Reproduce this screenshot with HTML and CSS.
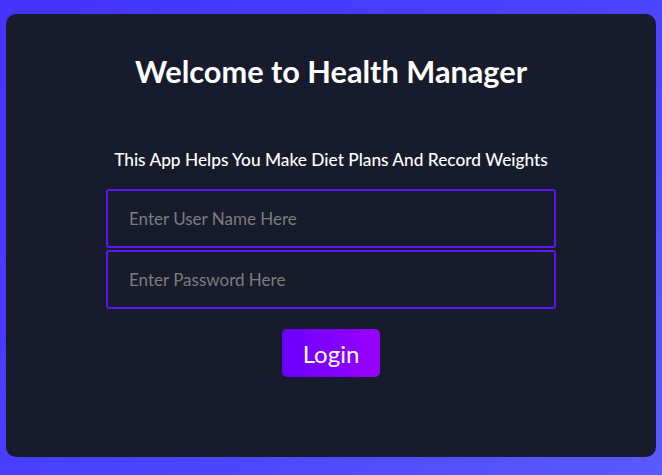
FILE: index.html
```html
<!DOCTYPE html>
<html lang="en">
<head>
<meta charset="utf-8">
<title>Health Manager</title>
<link rel="stylesheet" href="styles.css">
</head>
<body>
<main class="card">
  <h1 class="title">Welcome to Health Manager</h1>
  <p class="subtitle">This App Helps You Make Diet Plans And Record Weights</p>
  <form class="form">
    <input class="field" type="text" placeholder="Enter User Name Here">
    <input class="field" type="password" placeholder="Enter Password Here">
    <button class="login" type="button">Login</button>
  </form>
</main>
</body>
</html>
```
FILE: styles.css
```css
html, body {
  margin: 0;
  height: 100%;
}
body {
  background: linear-gradient(135deg, #4433fb 0%, #4a40ff 50%, #5a5aff 100%);
  padding: 14px 6px 18px;
  box-sizing: border-box;
  font-family: Lato, "Open Sans", sans-serif;
}
.card {
  background: #171b2b;
  border-radius: 10px;
  height: 443px;
  box-sizing: border-box;
  padding-top: 38px;
  display: flex;
  flex-direction: column;
  align-items: center;
}
.title {
  margin: 0;
  color: #ffffff;
  font-size: 30.7px;
  line-height: 40px;
  font-weight: 700;
}
.subtitle {
  margin: 57px 0 0;
  color: #ffffff;
  font-size: 17.3px;
  line-height: 22px;
  font-weight: 500;
}
.form {
  margin: 18px 0 0;
  width: 450px;
  display: flex;
  flex-direction: column;
  align-items: center;
  gap: 2px;
}
.field {
  margin: 0;
  width: 100%;
  height: 59px;
  box-sizing: border-box;
  background: #171b2b;
  border: 2px solid #5b16f5;
  border-radius: 3px;
  padding: 0 21px;
  font-family: inherit;
  font-size: 17px;
  color: #ffffff;
  outline: none;
}
.field::placeholder {
  color: #7d7d7d;
}
.login {
  margin: 18px 0 0;
  width: 98px;
  height: 48px;
  border: none;
  border-radius: 5px;
  background: linear-gradient(90deg, #6a00ff, #9900ff);
  color: #ffffff;
  font-family: inherit;
  font-size: 24px;
  cursor: pointer;
}
```
